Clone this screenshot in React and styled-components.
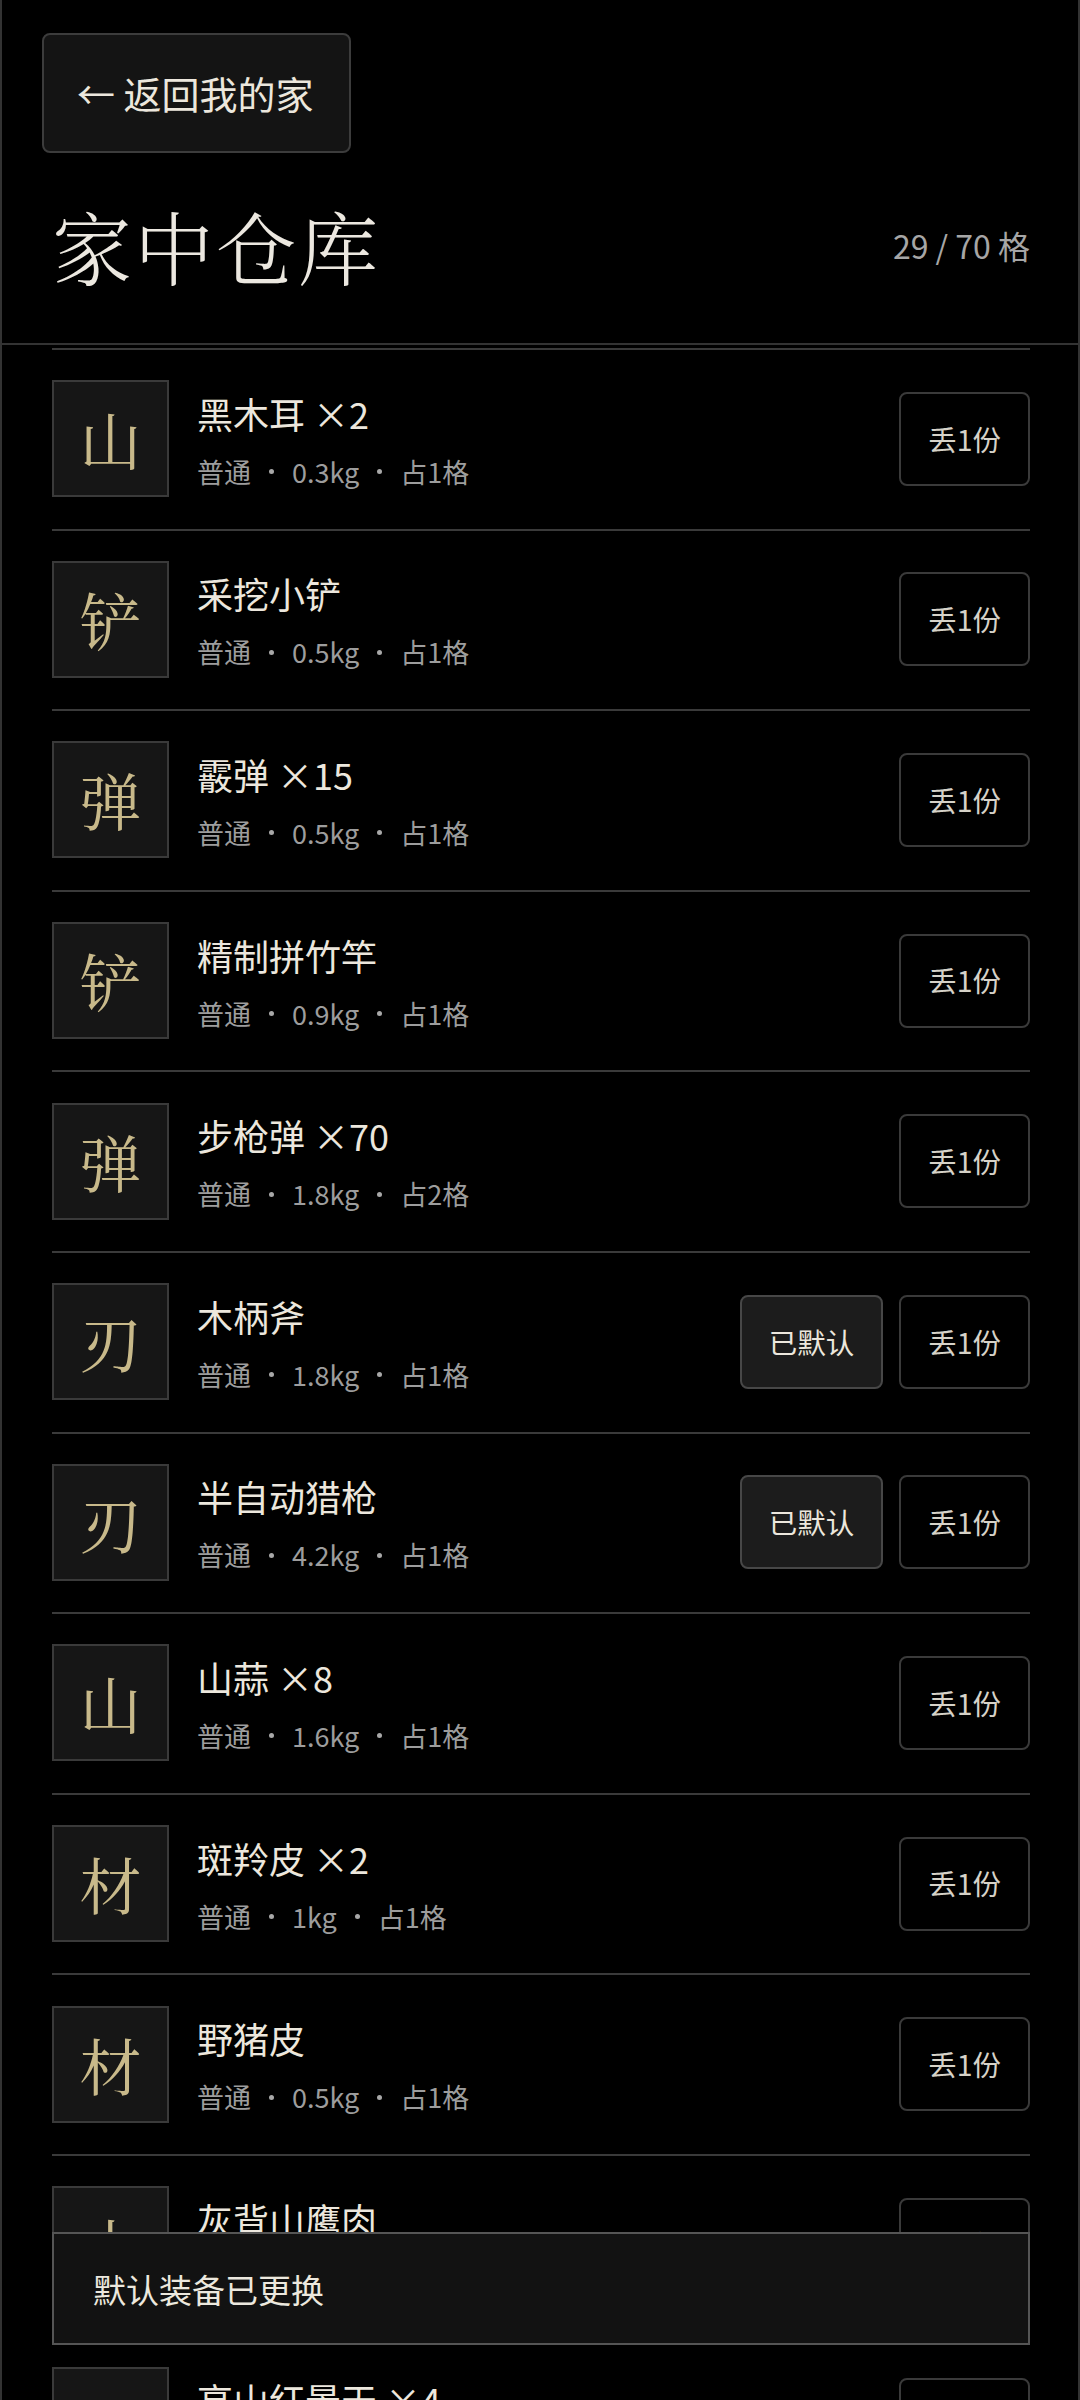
import styled, { createGlobalStyle } from "styled-components";

const GlobalStyle = createGlobalStyle`
  html, body {
    margin: 0;
    padding: 0;
    background: #000;
  }
  body {
    font-family: "Noto Sans CJK SC", "Noto Sans", sans-serif;
    color: #ece7dd;
  }
  * {
    box-sizing: border-box;
  }
`;

const SERIF = `"Noto Serif CJK SC", "Source Han Serif SC", "Noto Sans CJK SC", serif`;

const Page = styled.div`
  min-height: 100vh;
  background: #000;
  border-left: 2px solid #333;
  border-right: 2px solid #333;
  padding-bottom: 200px;
`;

const Header = styled.header`
  padding: 33px 48px 50px 40px;
  border-bottom: 2px solid #333;
`;

const BackButton = styled.button`
  height: 120px;
  padding: 0 35px 0 33px;
  background: #141414;
  border: 2px solid #3c3c3c;
  border-radius: 8px;
  color: #ece7dd;
  font-family: inherit;
  font-size: 38px;
  line-height: 1;
  cursor: pointer;
`;

const TitleRow = styled.div`
  display: flex;
  align-items: center;
  justify-content: space-between;
  margin-top: 44px;
`;

const Title = styled.h1`
  margin: 0;
  padding-left: 10px;
  font-family: ${SERIF};
  font-weight: 300;
  font-size: 80px;
  line-height: 96px;
  letter-spacing: 2px;
  color: #ece8e0;
`;

const Capacity = styled.span`
  font-size: 32px;
  color: #a6a6a6;
`;

const List = styled.ul`
  list-style: none;
  margin: 3px 0 0;
  padding: 0 48px 0 50px;
`;

const Row = styled.li`
  display: flex;
  align-items: center;
  gap: 28px;
  padding: 30.3px 0 31.3px;
  border-top: 2px solid #3a3a3a;
`;

const IconBox = styled.div`
  flex: none;
  width: 117px;
  height: 117px;
  display: flex;
  align-items: center;
  justify-content: center;
  background: #161616;
  border: 2px solid #3a3a3a;
  font-family: ${SERIF};
  font-weight: 400;
  font-size: 62px;
  color: #c8b98a;
`;

const Info = styled.div`
  flex: 1;
  min-width: 0;
  display: flex;
  flex-direction: column;
  gap: 16px;
`;

const Name = styled.div`
  font-size: 36px;
  line-height: 50px;
  color: #ece7dd;
`;

const Meta = styled.div`
  display: flex;
  align-items: center;
  font-size: 27px;
  line-height: 36px;
  color: #9d9d9d;
`;

const Dot = styled.span`
  width: 5px;
  height: 5px;
  border-radius: 50%;
  background: #a8a8a8;
  margin: 0 18px;
`;

const Actions = styled.div`
  flex: none;
  display: flex;
  gap: 16px;
`;

const ActionButton = styled.button`
  height: 94px;
  padding: 0 27px;
  border-radius: 8px;
  border: 2px solid ${(p) => (p.$filled ? "#474747" : "#3a3a3a")};
  background: ${(p) => (p.$filled ? "#1c1c1c" : "#000")};
  color: ${(p) => (p.$filled ? "#ece7dd" : "#d6d2c8")};
  font-family: inherit;
  font-size: 28.5px;
  line-height: 1;
  cursor: pointer;
`;

const Toast = styled.div`
  position: fixed;
  left: 52px;
  right: 50px;
  bottom: 55px;
  height: 113px;
  display: flex;
  align-items: center;
  padding: 0 39px;
  background: #121212;
  border: 2px solid #555;
  font-size: 33px;
  color: #ece8de;
`;

const items = [
  { icon: "山", name: "黑木耳 ×2", weight: "0.3kg", slots: 1 },
  { icon: "铲", name: "采挖小铲", weight: "0.5kg", slots: 1 },
  { icon: "弹", name: "霰弹 ×15", weight: "0.5kg", slots: 1 },
  { icon: "铲", name: "精制拼竹竿", weight: "0.9kg", slots: 1 },
  { icon: "弹", name: "步枪弹 ×70", weight: "1.8kg", slots: 2 },
  { icon: "刃", name: "木柄斧", weight: "1.8kg", slots: 1, isDefault: true },
  { icon: "刃", name: "半自动猎枪", weight: "4.2kg", slots: 1, isDefault: true },
  { icon: "山", name: "山蒜 ×8", weight: "1.6kg", slots: 1 },
  { icon: "材", name: "斑羚皮 ×2", weight: "1kg", slots: 1 },
  { icon: "材", name: "野猪皮", weight: "0.5kg", slots: 1 },
  { icon: "山", name: "灰背山鹰肉", weight: "0.4kg", slots: 1 },
  { icon: "山", name: "高山红景天 ×4", weight: "0.2kg", slots: 1 },
  { icon: "材", name: "松木 ×6", weight: "3kg", slots: 2 },
];

const App = () => {
  return (
    <>
      <GlobalStyle />
      <Page>
        <Header>
          <BackButton>← 返回我的家</BackButton>
          <TitleRow>
            <Title>家中仓库</Title>
            <Capacity>29 / 70 格</Capacity>
          </TitleRow>
        </Header>
        <List>
          {items.map((item, i) => (
            <Row key={i}>
              <IconBox>{item.icon}</IconBox>
              <Info>
                <Name>{item.name}</Name>
                <Meta>
                  <span>普通</span>
                  <Dot />
                  <span>{item.weight}</span>
                  <Dot />
                  <span>占{item.slots}格</span>
                </Meta>
              </Info>
              <Actions>
                {item.isDefault && <ActionButton $filled>已默认</ActionButton>}
                <ActionButton>丢1份</ActionButton>
              </Actions>
            </Row>
          ))}
        </List>
        <Toast>默认装备已更换</Toast>
      </Page>
    </>
  );
};

export default App;
